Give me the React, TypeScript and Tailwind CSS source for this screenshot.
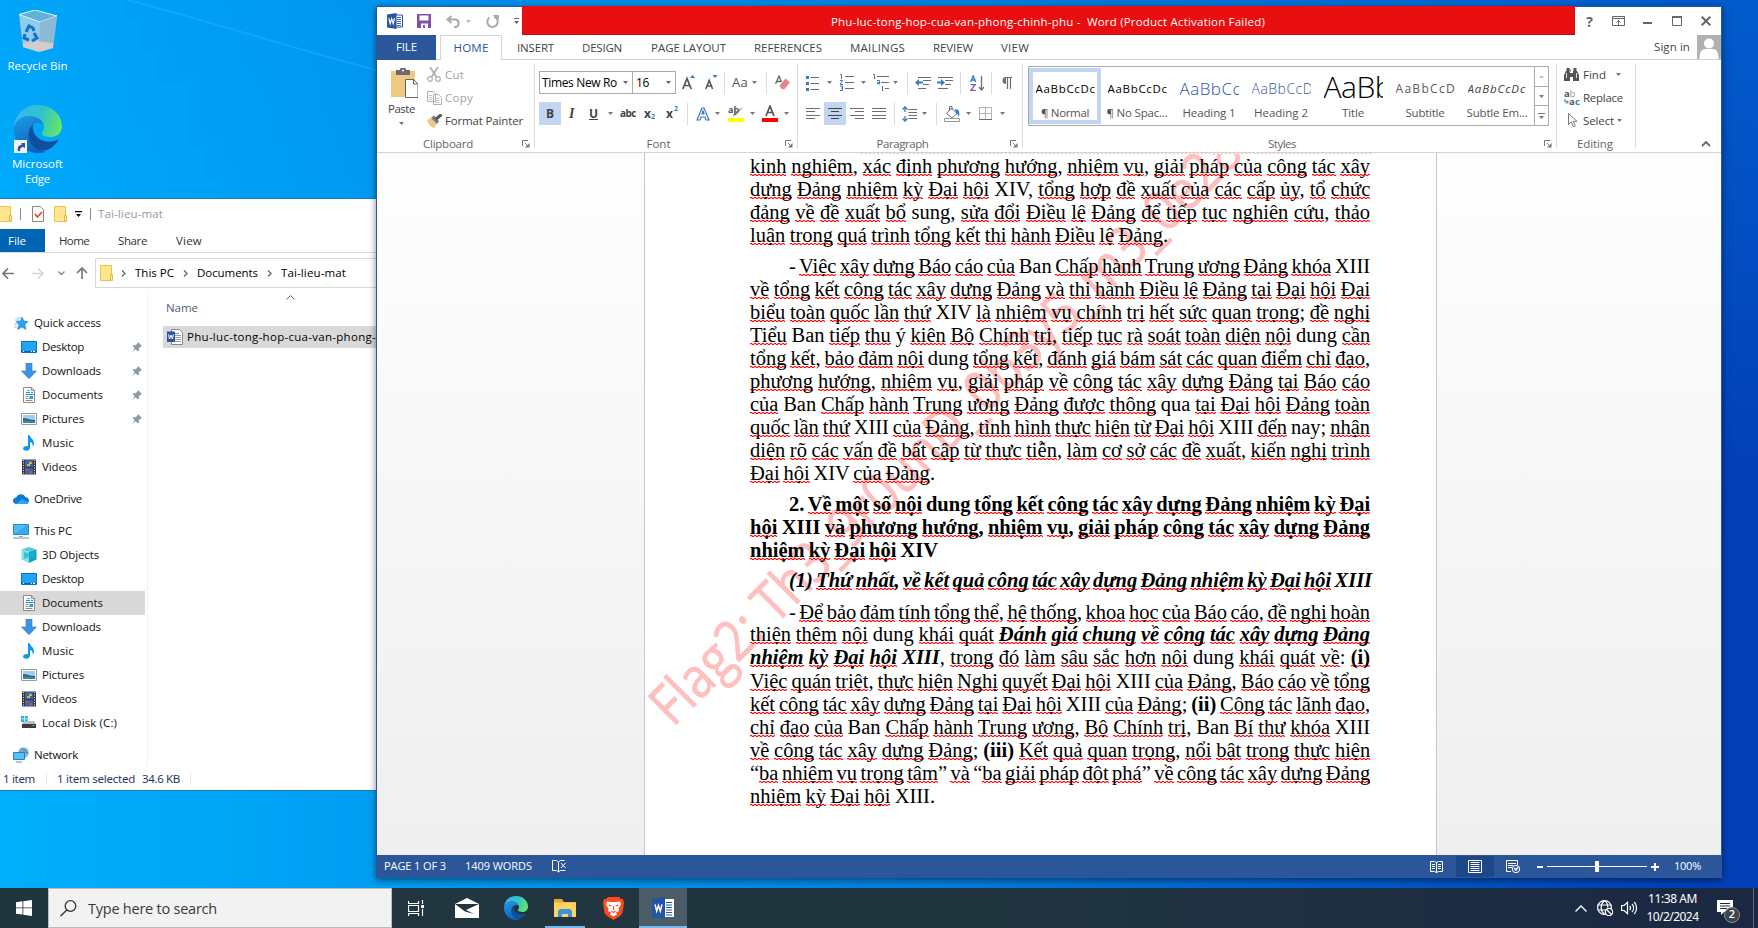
import React, { useLayoutEffect, useRef } from "react";

/* ---------- text helpers ---------- */

function T({ w, className = "", children }: { w: number; className?: string; children: string }) {
  const ref = useRef<HTMLSpanElement>(null);
  useLayoutEffect(() => {
    const el = ref.current;
    if (!el) return;
    el.style.letterSpacing = "0px";
    const natural = el.getBoundingClientRect().width;
    el.style.letterSpacing = `${(w - natural) / children.length}px`;
  }, [w, children]);
  return (
    <span className={`shrink-0 whitespace-pre ${className}`} style={{ width: w }}>
      <span ref={ref} className="inline-block">{children}</span>
    </span>
  );
}

type Run = [string, string];
const PLAIN = new Set(["XIV", "XIII", "sung", "Ban", "dung", "ý", "nay", "qua", "2", "-", "(1)", "(ii)", "(iii)"]);
const WAVE =
  "[background:repeating-linear-gradient(90deg,#ff1010_0_2px,#ffb4b4_2px_4px)_0_19px/100%_1px_no-repeat,repeating-linear-gradient(90deg,#ffb4b4_0_2px,#ff1010_2px_4px)_0_20px/100%_1px_no-repeat]";

function Words({ text }: { text: string }) {
  return (
    <>
      {text.split(/(\s+)/).map((tok, i) => {
        if (/^\s*$/.test(tok)) return tok;
        const m = tok.match(/^([“]?)(.*?)([,;:.”]*)$/)!;
        if (PLAIN.has(m[2])) return tok;
        return (
          <React.Fragment key={i}>
            {m[1]}
            <span className={WAVE}>{m[2]}</span>
            {m[3]}
          </React.Fragment>
        );
      })}
    </>
  );
}

function Line({ w = 620, runs, className = "" }: { w?: number; runs: Run[]; className?: string }) {
  const ref = useRef<HTMLSpanElement>(null);
  useLayoutEffect(() => {
    const el = ref.current;
    if (!el) return;
    el.style.wordSpacing = "0px";
    const spaces = (el.textContent || "").split(" ").length - 1;
    el.style.wordSpacing = `${(w - el.getBoundingClientRect().width) / spaces}px`;
  }, [w]);
  return (
    <div className={`h-[23px] whitespace-pre ${className}`}>
      <span ref={ref} className="inline-block">
        {runs.map(([c, t], i) => (
          <span key={i} className={c}><Words text={t} /></span>
        ))}
      </span>
    </div>
  );
}

const N = "";
const B = "font-bold";
const BI = "font-bold italic";

/* ---------- small shapes ---------- */

const Svg = ({ w, h, vb, className = "", children }: { w: number; h: number; vb?: string; className?: string; children: React.ReactNode }) => (
  <svg width={w} height={h} viewBox={vb || `0 0 ${w} ${h}`} className={`block shrink-0 ${className}`} fill="none">{children}</svg>
);
const Arr = ({ className = "text-[#777]" }: { className?: string }) => (
  <Svg w={5} h={3} className={className}><path d="M0 0h5L2.500 3z" fill="currentColor" /></Svg>
);
const Launch = () => (
  <Svg w={8} h={8}><path d="M.5 6V.5H6M3 3l3.500 3.500" stroke="#777" /><path d="M7.500 3v4.500H3z" fill="#777" /></Svg>
);
const Sep = ({ className = "" }: { className?: string }) => <div className={`h-[22px] w-px shrink-0 bg-[#dcdcdc] ${className}`} />;
const Cell = ({ className = "", children }: { className?: string; children: React.ReactNode }) => (
  <div className={`flex shrink-0 items-center ${className}`}>{children}</div>
);

const Folder = ({ className = "" }: { className?: string }) => (
  <Svg w={13} h={16} className={className}>
    <path d="M.5.5h11v15H.5z" fill="#ffe68f" stroke="#eac24d" />
    <path d="M10.500 9.500h2v6h-2z" fill="#ffe68f" stroke="#e5b93c" />
  </Svg>
);
const WordIcon = ({ s = 16 }: { s?: number }) => (
  <Svg w={s} h={s} vb="0 0 16 16">
    <path d="M8 2h7.500v12H8z" fill="#fff" stroke="#2b579a" />
    <path d="M10 4.500h4M10 6.500h4M10 8.500h4M10 10.500h4M10 12.500h4" stroke="#2b579a" strokeWidth=".9" />
    <path d="M0 1.500 9.500 0v16L0 14.500z" fill="#2b579a" />
    <path d="M1.800 5.200 3.200 10.600 4.700 5.800 6.200 10.600 7.600 5.200" stroke="#fff" strokeWidth="1.200" />
  </Svg>
);
const Edge = ({ s }: { s: number }) => (
  <Svg w={s} h={s} vb="0 0 48 48">
    <defs>
      <linearGradient id="eg1" x1="0" y1="10" x2="48" y2="26" gradientUnits="userSpaceOnUse">
        <stop stopColor="#36b8f2" /><stop offset=".5" stopColor="#2fc3cf" /><stop offset="1" stopColor="#6be85a" />
      </linearGradient>
      <linearGradient id="eg2" x1="8" y1="12" x2="24" y2="46" gradientUnits="userSpaceOnUse">
        <stop stopColor="#1c95e0" /><stop offset="1" stopColor="#0c60bb" />
      </linearGradient>
    </defs>
    <path d="M0 22C1 8 12 0 24 0c14 0 24 10 24 21 0 7-5 11-11 11-6 0-10-1.500-9-4 .6-1.600 2-2.500 2-6C30 16 23 11 15 11 7 11 2 16 0 22z" fill="url(#eg1)" />
    <path d="M0 22c2-6 7-11 15-11 8 0 14 4 14.500 9-2-2-5-2.500-7.500-1.500C15 21 13 31 19 39c4 5 9 7.500 13 7.500-3 1-5 1.500-8 1.500C10 48-1 37 0 22z" fill="url(#eg2)" />
    <path d="M19 19.500C13 25 13 35 19 41c5 6 15 8 25-5 .8-1-.3-1.600-1.300-1C33 40 20 34 19 24c-.2-2 0-3 0-4.500z" fill="#0f4f9d" />
  </Svg>
);

/* ---------- explorer tree icons ---------- */

const StarI = () => <Svg w={16} h={16}><path d="M9 2l1.800 4 4.200.5-3 3 .8 5L9 12l-4.500 2.500L6 9.500 3 6.500 7.500 6z" fill="#2aa3ea" stroke="#1b7fc4" strokeWidth=".6" /><path d="M4 3h4M2 5h4M1 9h4M1 12h3" stroke="#7cc8f2" /></Svg>;
const DesktopI = () => <Svg w={16} h={16}><path d="M.5 2.500h15v11H.5z" fill="#22a3f7" stroke="#0d73c0" /><path d="M1 12.500h14" stroke="#0a5ea5" /><path d="M2 12.500h1M10 12.500h1M12 12.500h2" stroke="#fff" /></Svg>;
const DownI = () => <Svg w={16} h={16}><path d="M5 0h6v8h4.500L8 15.800.5 8H5z" fill="#3b94e4" stroke="#2a7cc8" strokeWidth=".6" /></Svg>;
const DocI = () => <Svg w={16} h={16}><path d="M2.500.5h8l3 3v12h-11z" fill="#fff" stroke="#8c8c8c" /><path d="M10.500.5v3h3" stroke="#8c8c8c" /><path d="M6.500 3.500h2M5 5.500h4M10 5.500h2M4.500 7.500h8" stroke="#1e90d8" /><path d="M4.500 9.500h3M4.500 11.500h3M4.500 13.500h7" stroke="#888" /><path d="M8.500 9h3.500v3H8.500z" fill="#3d93cf" /></Svg>;
const PicI = () => <Svg w={16} h={16}><path d="M.5 2.500h15v11H.5z" fill="#fff" stroke="#9a9a9a" /><path d="M2 4h12v8H2z" fill="#9fd0f4" /><path d="M2 7c4 0 7 2 12 2v3H2z" fill="#2e6a72" /><path d="M2 10c4-1 8 0 12 1v1H2z" fill="#3f82b8" /></Svg>;
const MusicI = () => <Svg w={16} h={16}><path d="M7 0h1.500c.5 3 4.500 4 4.500 8 0 1.500-.5 2.500-1.500 3.500.5-3-1-4-2.500-4.500v5.500c0 2-1.500 3.200-3.500 3.200S2 15 2 13.500s2-3 5-2.500z" fill="#1199ee" /></Svg>;
const VideoI = () => <Svg w={16} h={16}><path d="M1 .5h14v15H1z" fill="#3a3a3a" /><path d="M4 1h8v7H4zM4 9h8v6H4z" fill="#2f66b8" /><path d="M8 4h3M6 6h3" stroke="#e8b22c" strokeWidth="2" /><path d="M5 11h2M8 13h3" stroke="#d84b2c" strokeWidth="2" /><path d="M2.500 1v14M13.500 1v14" stroke="#eee" strokeDasharray="1 1.500" /></Svg>;
const CloudI = () => <Svg w={16} h={16}><path d="M3.500 13C1.500 13 0 11.600 0 9.800 0 8 1.400 6.700 3.200 6.600 4 4.400 5.800 3.200 8 3.200c2 0 3.700 1 4.400 2.900C14.500 6.300 16 7.800 16 9.700c0 1.900-1.500 3.300-3.400 3.300z" fill="#0f78d4" /><path d="M3 12.800 9 8l6.500 3.500c-.6 1-1.600 1.500-2.900 1.500H3.500z" fill="#2aa8ec" /></Svg>;
const PcI = () => <Svg w={16} h={16}><path d="M.5 1.500h15v10H.5z" fill="#4fbcf7" stroke="#3a86b8" /><path d="M1 11 14 2h1v9z" fill="#36a9f0" /><path d="M6 13.500h4" stroke="#9ab" /><path d="M0 15h16" stroke="#8aa0ae" strokeWidth="1.200" /></Svg>;
const CubeI = () => <Svg w={16} h={16}><path d="M8 0l7.500 2.500L8 5 .5 2.500z" fill="#53c9de" /><path d="M.5 2.500 8 5v11L.5 12.500z" fill="#7fe0ea" /><path d="M15.500 2.500 8 5v11l7.500-3.500z" fill="#12a3bd" /><path d="M3 5l5 1.500L13 5v7l-5-2-5 2z" fill="#22b7cc" opacity=".7" /></Svg>;
const DiskI = () => <Svg w={16} h={16}><path d="M0 1h3v2.500H0zM3.800 1h3v2.500h-3zM0 4.300h3V7H0zM3.800 4.300h3V7h-3z" fill="#17b3ee" /><path d="M3 6h10l2 3H1z" fill="#bdbdbd" /><path d="M1 9h14v4H1z" fill="#3c3c3c" /><path d="M11.500 10.500h2" stroke="#4be04b" /></Svg>;
const NetI = () => <Svg w={16} h={16}><circle cx="10.500" cy="5.500" r="5.300" fill="#7fb6d8" /><path d="M8 2c2 0 3 2 5 1M7 5c3 1 5-1 8 1" stroke="#3e7ea8" /><path d="M.5 5.500h11v7H.5z" fill="#58c0f8" stroke="#2c7fbb" /><path d="M3 15h6" stroke="#9ab" strokeWidth="1.400" /></Svg>;
const PinI = () => <Svg w={10} h={10} className="text-[#8e9aa4]"><path d="M6 0l4 4-1.200.4-2 2 .2 1.800L5.800 9.400 3.600 7.200 0 10l2.700-3.700L.6 4.200 1.800 3l1.800.2 2-2z" fill="currentColor" /></Svg>;

function TreeRow({ icon, label, w, level = 1, pin, sel, className = "" }: { icon: React.ReactNode; label: string; w: number; level?: number; pin?: boolean; sel?: boolean; className?: string }) {
  return (
    <div className={`flex h-6 w-[145px] items-center ${level === 1 ? "pl-[21px]" : "pl-[13px]"} ${sel ? "bg-[#d9d9d9]" : ""} ${className}`}>
      {icon}
      <T w={w} className="ml-[5px]">{label}</T>
      {pin && <div className="mr-[3px] ml-auto"><PinI /></div>}
    </div>
  );
}

const Chev = () => <Svg w={5} h={7}><path d="M1 .5l3 3-3 3" stroke="#666" strokeWidth="1.300" /></Svg>;

function Explorer() {
  return (
    <div className="absolute top-[198px] left-0 flex h-[593px] w-[376px] flex-col border-y border-[#1a7db5] bg-white text-[11.500px] text-[#111]">
      <div className="flex h-[30px] shrink-0 items-center">
        <Folder className="-ml-px" />
        <div className="ml-2 h-3 w-px bg-[#888]" />
        <Svg w={12} h={16} className="ml-[11px]"><path d="M.5.5h8l3 3v12H.5z" fill="#fafafa" stroke="#888" /><path d="M3 8l2.500 3L10 6" stroke="#e0531f" strokeWidth="1.800" /></Svg>
        <Folder className="ml-[10px]" />
        <Svg w={7} h={6} className="ml-2"><path d="M0 .5h7" stroke="#000" strokeWidth="1.500" /><path d="M1 3h5L3.500 6z" fill="#000" /></Svg>
        <div className="ml-2 h-3 w-px bg-[#888]" />
        <T w={65} className="ml-[7px] text-[#999]">Tai-lieu-mat</T>
      </div>
      <div className="flex h-6 shrink-0 items-center border-b border-[#dadbdc] text-[#333]">
        <div className="flex h-[23px] w-[45px] items-center bg-[#0066b4] pl-2 text-white"><T w={18}>File</T></div>
        <T w={30} className="ml-[14px]">Home</T>
        <T w={29} className="ml-[29px]">Share</T>
        <T w={26} className="ml-[29px]">View</T>
      </div>
      <div className="mt-[5px] flex h-[30px] shrink-0 items-center">
        <Svg w={12} h={11} className="ml-[2px]"><path d="M12 5.500H1M6 .5l-5 5 5 5" stroke="#777" strokeWidth="1.700" /></Svg>
        <Svg w={12} h={11} className="ml-[18px]"><path d="M0 5.500h11M6 .5l5 5-5 5" stroke="#d5d5d5" strokeWidth="1.500" /></Svg>
        <Svg w={7} h={5} className="ml-[14px]"><path d="M.5.5l3 3 3-3" stroke="#888" strokeWidth="1.400" /></Svg>
        <Svg w={12} h={12} className="ml-[11px]"><path d="M6 12V1M1 6l5-5 5 5" stroke="#777" strokeWidth="1.700" /></Svg>
        <div className="ml-[7px] flex h-[30px] flex-1 items-center border border-r-0 border-[#d9d9d9] text-black">
          <Folder className="ml-1" />
          <div className="ml-[8px]"><Chev /></div>
          <T w={39} className="ml-[9px]">This PC</T>
          <div className="ml-[9px]"><Chev /></div>
          <T w={61} className="ml-[9px]">Documents</T>
          <div className="ml-[9px]"><Chev /></div>
          <T w={65} className="ml-[9px]">Tai-lieu-mat</T>
        </div>
      </div>
      <div className="mt-[6px] flex h-[474px] shrink-0">
        <div className="h-[472px] w-[148px] border-r border-[#f0f0f0] pt-[17px]">
          <TreeRow level={0} icon={<StarI />} label="Quick access" w={67} />
          <TreeRow icon={<DesktopI />} label="Desktop" w={42} pin />
          <TreeRow icon={<DownI />} label="Downloads" w={59} pin />
          <TreeRow icon={<DocI />} label="Documents" w={61} pin />
          <TreeRow icon={<PicI />} label="Pictures" w={42} pin />
          <TreeRow icon={<MusicI />} label="Music" w={32} />
          <TreeRow icon={<VideoI />} label="Videos" w={35} />
          <TreeRow level={0} icon={<CloudI />} label="OneDrive" w={48} className="mt-2" />
          <TreeRow level={0} icon={<PcI />} label="This PC" w={38} className="mt-2" />
          <TreeRow icon={<CubeI />} label="3D Objects" w={57} />
          <TreeRow icon={<DesktopI />} label="Desktop" w={42} />
          <TreeRow icon={<DocI />} label="Documents" w={61} sel />
          <TreeRow icon={<DownI />} label="Downloads" w={59} />
          <TreeRow icon={<MusicI />} label="Music" w={32} />
          <TreeRow icon={<PicI />} label="Pictures" w={42} />
          <TreeRow icon={<VideoI />} label="Videos" w={35} />
          <TreeRow icon={<DiskI />} label="Local Disk (C:)" w={75} />
          <TreeRow level={0} icon={<NetI />} label="Network" w={44} className="mt-2" />
        </div>
        <div className="flex flex-1 flex-col overflow-hidden">
          <Svg w={9} h={5} className="mt-[1px] ml-[138px]"><path d="M.5 4.500l4-4 4 4" stroke="#666" /></Svg>
          <div className="mt-px ml-[18px] flex h-[13px] items-center text-[#4c607a]"><T w={32}>Name</T></div>
          <div className="mt-[12px] ml-[15px] flex h-[22px] items-center overflow-hidden bg-[#d9d9d9] text-black">
            <Svg w={16} h={16} className="ml-1"><path d="M4.500.5h8l3 3v12h-11z" fill="#fff" stroke="#888" /><path d="M7 4.500h5M8 6.500h6M8 8.500h6M8 10.500h6M7 12.500h7" stroke="#999" /><path d="M0 2.500h8v10.500H0z" fill="#2b579a" /><path d="M1.500 5.500l1 4.500L4 6l1.400 4 1-4.500" stroke="#fff" /></Svg>
            <T w={189} className="ml-[4px]">Phu-luc-tong-hop-cua-van-phong-</T>
          </div>
        </div>
      </div>
      <div className="flex h-[22px] items-center font-['Noto_Sans',sans-serif] text-[11.500px] text-[#26386b]">
        <T w={32} className="ml-[3px]">1 item</T>
        <div className="ml-[11px] h-3 w-px bg-[#e5e5e5]" />
        <T w={78} className="ml-[10px]">1 item selected</T>
        <T w={38} className="ml-[7px]">34.6 KB</T>
        <div className="ml-[10px] h-3 w-px bg-[#e5e5e5]" />
      </div>
    </div>
  );
}

/* ---------- word window ---------- */

const G = "#6d6d6d";
const BL = "#3b7ab8";

function TitleBar() {
  return (
    <div className="flex h-[28px] shrink-0 items-center">
      <div className="ml-[10px]"><WordIcon /></div>
      <Svg w={14} h={14} className="ml-[14px]"><path d="M0 0h14v14H0z" fill="#8250aa" /><path d="M2.500 1.500h9v5h-9z" fill="#fff" /><path d="M4 9.500h7V14H4z" fill="#fff" /><path d="M6 11h2v3H6z" fill="#8250aa" /></Svg>
      <Svg w={15} h={13} className="ml-[15px]"><path d="M5.500 1 1.500 4.500l4 3.500M2 4.500h7.500a3.800 3.800 0 0 1 0 7.500H8" stroke="#aaa" strokeWidth="2" /></Svg>
      <Arr className="ml-[5px] text-[#bbb]" />
      <Svg w={13} h={13} className="ml-[15px]"><path d="M3.500 2.500a5.200 5.200 0 1 0 6 0" stroke="#aaa" strokeWidth="2" /><path d="M7 0h6v5l-2-2-2 1z" fill="#aaa" /></Svg>
      <Svg w={5} h={6} className="ml-[15px]"><path d="M0 .5h5" stroke="#666" /><path d="M0 3h5L2.500 6z" fill="#666" /></Svg>
      <div className="-mt-px ml-[3px] flex h-[29px] w-[1053px] items-center border-b border-[#b01010] bg-[#e90f10] text-[11.500px] text-white">
        <T w={434} className="ml-[309px] pt-1">Phu-luc-tong-hop-cua-van-phong-chinh-phu -  Word (Product Activation Failed)</T>
      </div>
      <span className="ml-[10px] w-[9px] text-center text-[14px] font-bold text-[#666]">?</span>
      <Svg w={13} h={10} className="ml-[18px]"><path d="M.5.500h12v9H.5zM.5 2.500h12M6.500 9V4.500M4.500 6.500l2-2 2 2" stroke="#666" /></Svg>
      <Svg w={9} h={10} className="ml-[18px]"><path d="M0 7h9" stroke="#666" strokeWidth="2" /></Svg>
      <Svg w={10} h={10} className="ml-[20px]"><path d="M.5 1h9v8.500h-9z" stroke="#666" /><path d="M0 1h10" stroke="#666" strokeWidth="2" /></Svg>
      <Svg w={10} h={10} className="ml-[19px]"><path d="M.7.7l8.600 8.600M9.300.7.7 9.300" stroke="#666" strokeWidth="2" /></Svg>
    </div>
  );
}

function Tabs() {
  return (
    <div className="flex h-[25px] shrink-0 items-center border-b border-[#d4d4d4] text-[11.500px] text-[#444]">
      <div className="flex h-[25px] w-[59px] items-center justify-center bg-[#2b579a] text-white"><T w={21}>FILE</T></div>
      <div className="-mb-px ml-[4px] flex h-[25px] w-[62px] items-center justify-center border border-b-0 border-[#d4d4d4] bg-white text-[#2b579a]"><T w={35}>HOME</T></div>
      <div className="ml-[15px] flex gap-[28px] pt-[2px]">
        <T w={37}>INSERT</T>
        <T w={40}>DESIGN</T>
        <T w={75} className="ml-px">PAGE LAYOUT</T>
        <T w={68}>REFERENCES</T>
        <T w={55}>MAILINGS</T>
        <T w={40}>REVIEW</T>
        <T w={28}>VIEW</T>
      </div>
      <T w={36} className="ml-auto">Sign in</T>
      <Svg w={24} h={24} className="ml-[7px]"><path d="M0 0h24v24H0z" fill="#b1b1b1" /><circle cx="12" cy="8.500" r="5" fill="#fff" /><path d="M2.500 24c0-7 2-10 6-10h7c4 0 6 3 6 10z" fill="#fff" /></Svg>
    </div>
  );
}

function GroupFoot({ label, w, launch = true }: { label: string; w: number; launch?: boolean }) {
  return (
    <div className="mt-auto -mb-1 flex h-[16px] items-center text-[#666]">
      <div className="mr-[3px] flex flex-1 justify-center"><T w={w}>{label}</T></div>
      <div className="w-[12px]">{launch && <Launch />}</div>
    </div>
  );
}

const group = "flex h-[84px] shrink-0 flex-col border-r border-[#dcdcdc]";

function Clipboard() {
  return (
    <div className={`${group} w-[158px]`}>
      <div className="flex">
        <div className="ml-[11px] flex w-[29px] flex-col items-center pt-[4px]">
          <Svg w={29} h={30} className="ml-[2px]"><path d="M2 3h24v26H2z" fill="#eec982" /><path d="M7 2h4a3 3 0 0 1 6 0h4v5H7z" fill="#6a6a6a" /><circle cx="14" cy="2.500" r="1" fill="#fff" /><path d="M16.500 11.500h8l4.500 4.500v13.500H16.500z" fill="#fff" stroke="#666" /><path d="M24.500 11.500V16H29" stroke="#666" /></Svg>
          <T w={27} className="mt-[2px] -ml-[2px] text-[#444]">Paste</T>
          <Arr className="mt-[5px] -ml-[2px] text-[#777]" />
        </div>
        <div className="-mt-px ml-[10px] flex flex-col text-[#a3a3a3]">
          <div className="flex h-[23px] items-center"><Svg w={14} h={15}><path d="M3 0l6.500 10M11 0 4.500 10" stroke="#b0b0b0" strokeWidth="1.800" /><circle cx="3" cy="12" r="2.300" stroke="#b0b0b0" strokeWidth="1.200" /><circle cx="11" cy="12" r="2.300" stroke="#b0b0b0" strokeWidth="1.200" /></Svg><T w={19} className="ml-[4px]">Cut</T></div>
          <div className="flex h-[23px] items-center"><Svg w={15} h={14}><path d="M.5.5h6l2 2v8h-8zM6.500 3.500h5l3 3v7h-8z" fill="#fff" stroke="#b0b0b0" /><path d="M2 4.500h3M2 6.500h3M2 8.500h3M8.500 7.500h4M8.500 9.500h4M8.500 11.500h4" stroke="#c4c4c4" /></Svg><T w={28} className="ml-[3px]">Copy</T></div>
          <div className="flex h-[23px] items-center text-[#444]"><Svg w={16} h={14}><path d="M0 6l4-2 6 6-3 4C4 13 1 10 0 6z" fill="#eec982" /><path d="M4 4l3-2.500L12 7l-2 3z" fill="#777" /><path d="M9 5l5.500-4.500" stroke="#555" strokeWidth="3" /></Svg><T w={78} className="ml-[2px]">Format Painter</T></div>
        </div>
      </div>
      <GroupFoot label="Clipboard" w={50} />
    </div>
  );
}

function FontGroup() {
  return (
    <div className={`${group} w-[263px]`}>
      <div className="mt-[7px] ml-[4px] flex h-[23px] items-center text-[#222]">
        <div className="flex h-[23px] w-[94px] items-center border border-[#ababab] pl-[2px] text-[12px] text-black"><T w={75}>Times New Ro</T><Arr className="ml-[6px] text-[#666]" /></div>
        <div className="-ml-px flex h-[23px] w-[44px] items-center border border-[#ababab] pl-[3px] text-[12px] text-black"><T w={13}>16</T><Arr className="ml-[17px] text-[#666]" /></div>
        <Cell className="ml-[6px] w-[23px]"><Svg w={14} h={15}><path d="M.8 14 5 3.500 9.200 14M2.400 10.500h5.200" stroke="#555" strokeWidth="1.700" /><path d="M8 3h5l-2.500-3z" fill={BL} /></Svg></Cell>
        <Cell className="w-[19px]"><Svg w={13} h={15}><path d="M.8 14 4.200 5.500 7.600 14M2 11h4.400" stroke="#555" strokeWidth="1.600" /><path d="M7.500 0h5L10 3z" fill={BL} /></Svg></Cell>
        <Sep />
        <Cell className="ml-[7px] w-[20px] text-[13px] text-[#555]"><T w={16}>Aa</T></Cell>
        <Arr />
        <Sep className="ml-[9px]" />
        <Svg w={15} h={15} className="ml-[8px]"><path d="M.5 9 4 1l2.500 6M2 6.500h4" stroke="#666" strokeWidth="1.300" /><path d="M4.500 10.500 10.500 3.500l4.500 4-6 7-3-1z" fill="#e5838f" /></Svg>
      </div>
      <div className="mt-[8px] ml-[4px] flex h-[23px] items-center font-bold text-[#444]">
        <div className="flex h-[23px] w-[22px] items-center justify-center bg-[#c2d5f2] text-[12px]">B</div>
        <Cell className="w-[28px] pl-[8px] font-['Liberation_Serif',serif] text-[14px] italic">I</Cell>
        <Cell className="w-[19px] text-[12px] underline">U</Cell>
        <Cell className="w-[12px]"><Arr /></Cell>
        <Cell className="w-[24px] text-[10px] line-through"><T w={16}>abc</T></Cell>
        <Cell className="w-[22px] text-[12px]">x<span className="mt-[7px] text-[7px] text-[#3b7ab8]">2</span></Cell>
        <Cell className="w-[21px] text-[12px]">x<span className="-mt-[9px] ml-px text-[7px] text-[#3b7ab8]">2</span></Cell>
        <Sep />
        <Cell className="ml-[8px] w-[19px]"><Svg w={14} h={14}><path d="M1 13 6 1h2l5 12h-3l-1-3H5l-1 3zM6 7h2L7 4z" fill="#fff" stroke={BL} strokeWidth="1.200" /></Svg></Cell>
        <Cell className="w-[13px]"><Arr /></Cell>
        <Cell className="w-[22px]"><Svg w={17} h={17}><path d="M0 13h16v4H0z" fill="#ff0" /><text x="0" y="8" fontSize="9" fontWeight="700" fill="#555" fontFamily="Open Sans">ab</text><path d="M15 2 8 10l-3 1 1-3z" fill="#777" /></Svg></Cell>
        <Cell className="w-[12px]"><Arr /></Cell>
        <Cell className="w-[22px]"><Svg w={16} h={17}><path d="M0 13h16v4H0z" fill="#f00" /><path d="M4 11 8 1l4 10M5.500 7.500h5" stroke="#555" strokeWidth="1.700" /></Svg></Cell>
        <Arr />
      </div>
      <GroupFoot label="Font" w={24} />
    </div>
  );
}

function ParagraphGroup() {
  return (
    <div className={`${group} w-[225px]`}>
      <div className="mt-[7px] ml-[8px] flex h-[23px] items-center">
        <Cell className="w-[21px]"><Svg w={14} h={16}><path d="M4.500 2.500H13M4.500 8.500H13M4.500 14.500H13" stroke={G} /><path d="M0 1h3v3H0zM0 7h3v3H0zM0 13h3v3H0z" fill={BL} /></Svg></Cell>
        <Cell className="w-[13px]"><Arr /></Cell>
        <Cell className="w-[21px]"><Svg w={14} h={17}><path d="M5 2.500h9M5 8.500h9M5 14.500h9" stroke={G} /><path d="M0 .5h1.500V5M0 6.500h2.500L0 10.500h3M0 12h2.500v2H1m1.500 0v2.500H0" stroke={BL} /></Svg></Cell>
        <Cell className="w-[12px]"><Arr /></Cell>
        <Cell className="w-[20px]"><Svg w={16} h={17}><path d="M4 2.500h12M8 8.500h8M12 14.500h4" stroke={G} /><path d="M0 .5h1.500V5M4 6.500h2.500V10H4.500V8.500h2M9.500 12v5" stroke={BL} /></Svg></Cell>
        <Cell className="w-[14px]"><Arr /></Cell>
        <Sep />
        <Cell className="ml-[7px] w-[22px]"><Svg w={16} h={12}><path d="M3 .5h13M8 3.500h8M8 7.500h6M3 11.500h8" stroke={G} /><path d="M0 5.500 4 2v2.500h4v2H4V9z" fill={BL} /></Svg></Cell>
        <Cell className="w-[23px]"><Svg w={16} h={12}><path d="M1 .5h15M8 3.500h8M8 7.500h6M1 11.500h10" stroke={G} /><path d="M8 5.500 4 2v2.500H0v2h4V9z" fill={BL} /></Svg></Cell>
        <Sep />
        <Cell className="ml-[9px] w-[21px]"><Svg w={14} h={16}><path d="M.7 7 3.200.8 5.700 7M1.500 5h3.500" stroke={BL} strokeWidth="1.300" /><path d="M.5 9.600h4.700L.8 15.400h4.900" stroke="#8250aa" strokeWidth="1.300" /><path d="M11.500 1v14M9 12l2.500 3 2.500-3" stroke={G} strokeWidth="1.300" /></Svg></Cell>
        <Sep />
        <Svg w={11} h={12} className="ml-[10px]"><path d="M4 0h6v1H4v6a3.500 3.500 0 0 1 0-7z" fill={G} /><path d="M5.500 0v12M8.500 0v12" stroke={G} strokeWidth="1.200" /></Svg>
      </div>
      <div className="mt-[8px] ml-[8px] flex h-[23px] items-center">
        <Cell className="w-[18px]"><Svg w={14} h={11}><path d="M0 .5h14M0 3.500h9M0 7.500h14M0 10.500h9" stroke={G} /></Svg></Cell>
        <Cell className="mr-[4px] h-[23px] w-[22px] justify-center bg-[#c2d5f2]"><Svg w={14} h={11}><path d="M0 .5h14M3 3.500h8M0 7.500h14M3 10.500h8" stroke="#444" /></Svg></Cell>
        <Cell className="w-[22px]"><Svg w={14} h={11}><path d="M0 .5h14M5 3.500h9M0 7.500h14M5 10.500h9" stroke={G} /></Svg></Cell>
        <Cell className="w-[22px]"><Svg w={14} h={11}><path d="M0 .5h14M0 3.500h14M0 7.500h14M0 10.500h14" stroke={G} /></Svg></Cell>
        <Sep />
        <Cell className="ml-[7px] w-[20px]"><Svg w={15} h={16}><path d="M6.500 3.500H15M6.500 6.500H15M6.500 9.500H15M6.500 12.500H15" stroke={G} /><path d="M3 1v5M3 10v5M.5 3.500 3 1l2.500 2.500M.5 12.500 3 15l2.500-2.500" stroke={BL} strokeWidth="1.300" /></Svg></Cell>
        <Cell className="w-[14px]"><Arr /></Cell>
        <Sep />
        <Cell className="ml-[7px] w-[22px]"><Svg w={16} h={16}><path d="M7.500 2 13 7.500 8 12 2.500 7.500z" stroke={G} /><path d="M5.500 5V.5h2.500V4" stroke={G} /><path d="M11 3c4 0 5 3 4 8-1-2-1-3-3-4z" fill={BL} /><path d="M.5 12.500h15v3H.5z" fill="#fff" stroke="#999" /></Svg></Cell>
        <Cell className="w-[13px]"><Arr /></Cell>
        <Cell className="w-[21px]"><Svg w={13} h={13}><path d="M.5.500h12v11M.5.500v11M6.500.500v12M.5 6.500h12" stroke={G} strokeDasharray="1 1" /><path d="M0 12.500h13" stroke={G} /></Svg></Cell>
        <Arr />
      </div>
      <GroupFoot label="Paragraph" w={52} />
    </div>
  );
}

function Style({ sample, cls, label, w, sel }: { sample: string; cls: string; label: string; w: number; sel?: boolean }) {
  return (
    <div className={`flex h-[56px] w-[72px] shrink-0 flex-col items-center border-4 ${sel ? "border-[#c2d5f2]" : "border-transparent"}`}>
      <div className={`flex h-[29px] w-[59px] shrink-0 items-center overflow-hidden whitespace-nowrap ${cls}`}>{sample}</div>
      <div className="mt-[2px] flex h-[20px] shrink-0 items-center text-[#555]"><T w={w}>{label}</T></div>
    </div>
  );
}

function StylesGroup() {
  return (
    <div className={`${group} w-[534px]`}>
      <div className="mt-[2px] ml-[5px] flex h-[60px] w-[521px] border border-[#ababab]">
        <div className="flex w-[505px] items-center">
          <Style sel sample="AaBbCcDc" cls="pt-[5px] text-[11.500px] tracking-[0.700px] text-black" label="¶ Normal" w={48} />
          <Style sample="AaBbCcDc" cls="pt-[5px] text-[11.500px] tracking-[0.700px] text-black" label="¶ No Spac..." w={61} />
          <Style sample="AaBbCc" cls="pt-[5px] text-[17px] font-light tracking-[0.500px] text-[#2b579a]" label="Heading 1" w={53} />
          <Style sample="AaBbCcD" cls="pt-[3px] text-[14px] font-light tracking-[0.500px] text-[#2b579a]" label="Heading 2" w={54} />
          <Style sample="AaBb" cls="text-[30px] leading-none font-light tracking-[-0.500px] text-black" label="Title" w={22} />
          <Style sample="AaBbCcD" cls="pt-[4px] text-[12px] tracking-[1.300px] text-[#5a5a5a]" label="Subtitle" w={39} />
          <Style sample="AaBbCcDc" cls="pt-[5px] text-[11.500px] tracking-[0.900px] text-[#404040] italic" label="Subtle Em..." w={61} />
        </div>
        <div className="flex flex-1 flex-col border-l border-[#ababab]">
          <div className="flex h-[20px] items-center justify-center border-b border-[#ababab]"><Svg w={5} h={3}><path d="M0 3h5L2.500 0z" fill="#c4c4c4" /></Svg></div>
          <div className="flex h-[19px] items-center justify-center border-b border-[#ababab]"><Arr /></div>
          <div className="flex flex-1 items-center justify-center"><Svg w={7} h={6}><path d="M0 .5h7" stroke="#777" /><path d="M1 3h5L3.500 6z" fill="#777" /></Svg></div>
        </div>
      </div>
      <GroupFoot label="Styles" w={28} />
    </div>
  );
}

function EditingGroup() {
  return (
    <div className={`${group} w-[79px] pl-[7px] text-[#444]`}>
      <div className="-mt-px flex h-[23px] items-center"><Svg w={15} h={13}><path d="M2.500 1h3v3h1V1h0M0 13V7l2-4h4v10zM15 13V7l-2-4H9v10z" fill="#555" /><path d="M2.500 0h3v3h-3zM9.500 0h3v3h-3zM6 5h3v4H6z" fill="#555" /><path d="M2.500 5v5M12.500 5v5" stroke="#ddd" /></Svg><T w={23} className="ml-[4px]">Find</T><Arr className="ml-[10px] text-[#777]" /></div>
      <div className="flex h-[23px] items-center"><Svg w={16} h={16}><text x="0" y="7" fontSize="9.500" fontWeight="700" fill="#555" fontFamily="Open Sans">a</text><text x="5.500" y="7" fontSize="9.500" fill="#999" fontFamily="Open Sans">b</text><text x="5" y="15" fontSize="9.500" fontWeight="700" fill="#555" fontFamily="Open Sans">a</text><text x="11" y="15" fontSize="9.500" fontWeight="700" fill="#3b7ab8" fontFamily="Open Sans">c</text><path d="M1 9v3h3M2.500 10.500l2 1.500-2 1.500" stroke={BL} /></Svg><T w={40} className="ml-[3px]">Replace</T></div>
      <div className="flex h-[23px] items-center"><Svg w={10} h={15} className="ml-[4px]"><path d="M.5.5v11l2.800-2.700 2 5 2-1-2-4.500H9z" fill="#fff" stroke="#777" /></Svg><T w={31} className="ml-[5px]">Select</T><Arr className="ml-[3px] text-[#777]" /></div>
      <div className="mt-auto -mb-1 flex h-[16px] items-center pl-[13px] text-[#666]"><T w={36}>Editing</T></div>
    </div>
  );
}

function Ribbon() {
  return (
    <div className="flex h-[93px] shrink-0 border-b border-[#d4d4d4] bg-white pt-[4px] text-[11.500px]">
      <Clipboard />
      <FontGroup />
      <ParagraphGroup />
      <StylesGroup />
      <EditingGroup />
      <Svg w={10} h={6} className="mb-[5px] ml-auto mr-[10px] self-end"><path d="M1 5l4-4 4 4" stroke="#666" strokeWidth="1.800" /></Svg>
    </div>
  );
}

function Watermark() {
  const ref = useRef<HTMLSpanElement>(null);
  useLayoutEffect(() => {
    const el = ref.current;
    if (el) el.style.transform = `rotate(-45deg) scaleX(${809 / el.offsetWidth})`;
  }, []);
  return (
    <span ref={ref} className="absolute top-[515px] left-[28px] origin-[0_60px] leading-[76px] text-[56px] whitespace-nowrap text-[#ffbfbf] [-webkit-text-stroke:0.8px_#ffbfbf]">
      Flag2: Th3_9r0unD_0b3y5_m3_0e28
    </span>
  );
}

function Document() {
  return (
    <div className="flex h-[702px] shrink-0 justify-start overflow-hidden bg-linear-to-b from-[#fefefe] to-[#efefef] pl-[267px]">
      <div className="relative h-[702px] w-[793px] overflow-hidden border-x border-[#c6c6c6] bg-white">
        <Watermark />
        <div className="absolute top-0 left-[216px] h-px w-[510px] bg-[repeating-linear-gradient(90deg,#f3c9c9_0_2px,#ffffff_2px_4px)]" />
        <div className="relative pt-[2px] pl-[105px] font-['Liberation_Serif',serif] text-[20.500px] leading-[23px] text-black">
          <Line runs={[[N, "kinh nghiệm, xác định phương hướng, nhiệm vụ, giải pháp của công tác xây"]]} />
          <Line runs={[[N, "dựng Đảng nhiệm kỳ Đại hội XIV, tổng hợp đề xuất của các cấp ủy, tổ chức"]]} />
          <Line runs={[[N, "đảng về đề xuất bổ sung, sửa đổi Điều lệ Đảng để tiếp tục nghiên cứu, thảo"]]} />
          <Line w={418} runs={[[N, "luận trong quá trình tổng kết thi hành Điều lệ Đảng."]]} />
          <Line className="mt-2 pl-[39px]" w={581} runs={[[N, "- Việc xây dựng Báo cáo của Ban Chấp hành Trung ương Đảng khóa XIII"]]} />
          <Line runs={[[N, "về tổng kết công tác xây dựng Đảng và thi hành Điều lệ Đảng tại Đại hội Đại"]]} />
          <Line runs={[[N, "biểu toàn quốc lần thứ XIV là nhiệm vụ chính trị hết sức quan trọng; đề nghị"]]} />
          <Line runs={[[N, "Tiểu Ban tiếp thu ý kiên Bộ Chính trị, tiếp tục rà soát toàn diện nội dung cần"]]} />
          <Line runs={[[N, "tổng kết, bảo đảm nội dung tổng kết, đánh giá bám sát các quan điểm chỉ đạo,"]]} />
          <Line runs={[[N, "phương hướng, nhiệm vụ, giải pháp về công tác xây dựng Đảng tại Báo cáo"]]} />
          <Line runs={[[N, "của Ban Chấp hành Trung ương Đảng được thông qua tại Đại hội Đảng toàn"]]} />
          <Line runs={[[N, "quốc lần thứ XIII của Đảng, tình hình thực hiện từ Đại hội XIII đến nay; nhận"]]} />
          <Line runs={[[N, "diện rõ các vấn đề bất cập từ thực tiễn, làm cơ sở các đề xuất, kiến nghị trình"]]} />
          <Line w={185} runs={[[N, "Đại hội XIV của Đảng."]]} />
          <Line className="mt-2 pl-[39px]" w={581} runs={[[B, "2. Về một số nội dung tổng kết công tác xây dựng Đảng nhiệm kỳ Đại"]]} />
          <Line runs={[[B, "hội XIII và phương hướng, nhiệm vụ, giải pháp công tác xây dựng Đảng"]]} />
          <Line w={188} runs={[[B, "nhiệm kỳ Đại hội XIV"]]} />
          <Line className="mt-[7px] pl-[39px]" w={583} runs={[[BI, "(1) Thứ nhất, về kết quả công tác xây dựng Đảng nhiệm kỳ Đại hội XIII"]]} />
          <Line className="mt-[9px] pl-[39px]" w={581} runs={[[N, "- Để bảo đảm tính tổng thể, hệ thống, khoa học của Báo cáo, đề nghị hoàn"]]} />
          <Line className="-mt-px" runs={[[N, "thiện thêm nội dung khái quát "], [BI, "Đánh giá chung về công tác xây dựng Đảng"]]} />
          <Line runs={[[BI, "nhiệm kỳ Đại hội XIII"], [N, ", trong đó làm sâu sắc hơn nội dung khái quát về: "], [B, "(i)"]]} />
          <Line className="mt-px" runs={[[N, "Việc quán triệt, thực hiện Nghị quyết Đại hội XIII của Đảng, Báo cáo về tổng"]]} />
          <Line runs={[[N, "kết công tác xây dựng Đảng tại Đại hội XIII của Đảng; "], [B, "(ii)"], [N, " Công tác lãnh đạo,"]]} />
          <Line runs={[[N, "chỉ đạo của Ban Chấp hành Trung ương, Bộ Chính trị, Ban Bí thư khóa XIII"]]} />
          <Line runs={[[N, "về công tác xây dựng Đảng; "], [B, "(iii)"], [N, " Kết quả quan trọng, nổi bật trong thực hiện"]]} />
          <Line runs={[[N, "“ba nhiệm vụ trọng tâm” và “ba giải pháp đột phá” về công tác xây dựng Đảng"]]} />
          <Line w={185} runs={[[N, "nhiệm kỳ Đại hội XIII."]]} />
        </div>
      </div>
    </div>
  );
}

function StatusBar() {
  return (
    <div className="flex h-[23px] shrink-0 items-center bg-[#2b579a] text-[11px] text-white">
      <T w={62} className="ml-[7px]">PAGE 1 OF 3</T>
      <T w={67} className="ml-[19px]">1409 WORDS</T>
      <Svg w={15} h={13} className="ml-[20px]"><path d="M.5.5h4l2 1.500 2-1.500h4M.5.5v10h4l2 1.500 2-1.500h5M6.500 2v10M9 3l4.500 5M13.500 3 9 8" stroke="#fff" /></Svg>
      <Svg w={13} h={12} className="ml-auto"><path d="M.5.500h4l2 1 2-1h4v10h-4l-2 1-2-1h-4zM6.500 1v11M2 3.500h3M2 5.500h3M2 7.500h3M8 3.500h3M8 5.500h3M8 7.500h3" stroke="#fff" /></Svg>
      <div className="ml-[13px] flex h-[21px] w-[38px] items-center justify-center bg-[#1e4788]"><Svg w={14} h={13}><path d="M.5.5h13v12H.5zM2.500 2.500h9M2.500 4.500h9M2.500 6.500h9M2.500 8.500h9M2.500 10.500h9" stroke="#fff" /></Svg></div>
      <Svg w={14} h={13} className="ml-[12px]"><path d="M5 11.500H.5V.5h11V5M2 3.500h8M2 5.500h5M2 7.500h4" stroke="#fff" /><circle cx="10" cy="9" r="3.700" fill="#2b579a" stroke="#fff" /><path d="M8 8l2 2 2-3" stroke="#fff" strokeWidth="1.500" /></Svg>
      <div className="ml-[17px] h-[2px] w-[6px] bg-white" />
      <div className="ml-[4px] flex w-[100px] items-center">
        <div className="h-px w-12 bg-white" /><div className="h-[11px] w-1 bg-white" /><div className="h-px w-12 bg-white" />
      </div>
      <Svg w={8} h={8} className="ml-[4px]"><path d="M0 4h8M4 0v8" stroke="#fff" strokeWidth="2" /></Svg>
      <T w={27} className="mr-[20px] ml-[15px]">100%</T>
    </div>
  );
}

function WordWindow() {
  return (
    <div className="absolute top-[6px] left-[376px] flex h-[872px] w-[1346px] flex-col border border-b-0 border-[#2b579a] bg-white shadow-[0_2px_7px_rgba(0,0,0,0.5)]">
      <TitleBar />
      <Tabs />
      <Ribbon />
      <Document />
      <StatusBar />
    </div>
  );
}

/* ---------- desktop and taskbar ---------- */

function DesktopIcons() {
  return (
    <div className="absolute top-[10px] left-0 flex w-[75px] flex-col items-center text-[11.500px] leading-[15px] text-white">
      <Svg w={38} h={42}>
        <path d="M0 4.500 16 0l22 6-4 32-14 4L4 37z" fill="#a9d2ea" opacity=".85" />
        <path d="M0 4.500 16 0l22 6-17 6z" fill="#5fb2dc" stroke="#e3f2fa" />
        <path d="M21 12 38 6l-4 32-14 4z" fill="#8bb5ce" opacity=".8" />
        <path d="M4 33l14-2 16 2v5l-14 4L4 37z" fill="#d2cccb" />
        <path d="M7 22l3-6 4 2 1 3M15 23l3 5-5 3M10 30l-5-2 1-4" stroke="#1273c6" strokeWidth="3" />
      </Svg>
      <T w={60} className="mt-[6px]">Recycle Bin</T>
      <div className="relative mt-[32px] ml-[1px]">
        <Edge s={48} />
        <Svg w={13} h={13} className="absolute bottom-0 left-0"><path d="M0 0h13v13H0z" fill="#f2f2f2" /><path d="M4 11c-1-4 1-6 3.500-6V3L11 3v5L9.500 7C7 7 6 8 6 11z" fill="#2456a0" /></Svg>
      </div>
      <T w={51} className="mt-[3px]">Microsoft</T>
      <T w={25}>Edge</T>
    </div>
  );
}

function Taskbar() {
  return (
    <div className="absolute bottom-0 left-0 flex h-10 w-full items-center bg-linear-to-r from-[#20363f] via-[#21353f] via-55% to-[#1a2843]">
      <div className="flex h-10 w-12 items-center justify-center"><Svg w={16} h={16}><path d="M0 2.200 6.500 1.300v6.200H0zM7.300 1.200 16 0v7.500H7.300zM0 8.300h6.500v6.300L0 13.700zM7.300 8.300H16V16l-8.700-1.200z" fill="#fff" /></Svg></div>
      <div className="flex h-10 w-[344px] items-center border border-[#bdbdbd] bg-[#f2f2f2] text-[#3a3a3a]">
        <Svg w={17} h={17} className="ml-[11px]"><circle cx="10.500" cy="6" r="5.300" stroke="#333" strokeWidth="1.300" /><path d="M6.800 10 .5 16.300" stroke="#333" strokeWidth="1.300" /></Svg>
        <T w={129} className="ml-[11px] pt-px text-[14.500px]">Type here to search</T>
      </div>
      <Svg w={17} h={16} className="ml-[16px]"><path d="M.5 1v2.500h10V1M.5 5.500h10v6H.5zM.5 16v-2.500h10V16M14.500 0v4M14.500 9v7" stroke="#fff" strokeWidth="1.200" /><path d="M13 5h3v3h-3z" fill="#fff" /></Svg>
      <Svg w={24} h={20} className="ml-[30px]"><path d="M0 6 12 0l12 6v14H0z" fill="#fff" /><path d="M0 6h24L11 12l8 4-9-2.500z" fill="#21353f" /></Svg>
      <div className="ml-[25px]"><Edge s={24} /></div>
      <div className="ml-[17px] flex h-10 w-10 flex-col items-center">
        <Svg w={22} h={18} className="mt-[11px]"><path d="M0 0h8l2 3h12v15H0z" fill="#e8a92c" /><path d="M0 3.500h22V18H0z" fill="#fbd462" /><path d="M4 18v-6l2-2h10l2 2v6h-4v-3H8v3z" fill="#3a93d8" /></Svg>
        <div className="mt-auto h-[2px] w-10 bg-[#76b9ed]" />
      </div>
      <Svg w={21} h={24} className="ml-[18px]"><path d="M5 1h11l2 2 2 0 1 4-1.500 10L17 20l-6.500 4L4 20l-2.500-3L0 7l1-4 2 0z" fill="#fb4a20" /><path d="M4 5.500l4 .5h5l4-.5 1 3-2.500 4 .5 2.500-3 1.500 1 2-3.500 2-3.500-2 1-2-3-1.500.5-2.500L3 8.500z" fill="#fff" /><path d="M5.500 9l3 1M15.500 9l-3 1M10.500 10v4M8.500 15l2 1.500 2-1.500" stroke="#fb4a20" strokeWidth="1.200" /></Svg>
      <div className="ml-[15px] flex h-10 w-12 flex-col items-center bg-[#4b5d66]">
        <Svg w={22} h={22} className="mt-[9px]"><path d="M12 2h10v18H12z" fill="#fff" /><path d="M14 5.500h6M14 8h6M14 10.500h6M14 13h6M14 15.500h6M14 18h6" stroke="#2b579a" /><path d="M0 2 13 0v22L0 20z" fill="#2355a4" /><path d="M3 7.500 4.700 14 6.500 8.500 8.300 14 10 7.500" stroke="#fff" strokeWidth="1.500" /></Svg>
        <div className="mt-auto h-[2px] w-12 bg-[#76b9ed]" />
      </div>
      <Svg w={12} h={7} className="ml-auto"><path d="M.5 6.500 6 1l5.500 5.500" stroke="#fff" strokeWidth="1.300" /></Svg>
      <Svg w={16} h={16} className="ml-[10px]"><circle cx="7.500" cy="7.500" r="6.900" stroke="#fff" strokeWidth="1.200" /><path d="M.5 5h14M.5 10h9M7.500.5c-4.500 4-4.500 10 0 14M7.500.5c2.500 2 3.300 4 3.300 7" stroke="#fff" strokeWidth="1.200" /><circle cx="12" cy="12" r="3.700" fill="#1c2c42" stroke="#fff" strokeWidth="1.200" /><path d="M9.500 9.500l5 5" stroke="#fff" strokeWidth="1.200" /></Svg>
      <Svg w={17} h={14} className="ml-[8px]"><path d="M.6 4.500h2.500L6.500 1.300v11.400L3.100 9.500H.6z" stroke="#fff" strokeWidth="1.200" /><path d="M8.700 5a3 3 0 0 1 0 4M11 3a6 6 0 0 1 0 8M13.300 1a9 9 0 0 1 0 12" stroke="#fff" strokeWidth="1.200" /></Svg>
      <div className="ml-[8px] flex w-[53px] flex-col items-center font-['Noto_Sans',sans-serif] text-[12px] leading-[18px] text-white">
        <T w={49}>11:38 AM</T>
        <T w={52}>10/2/2024</T>
      </div>
      <div className="relative ml-[18px]">
        <Svg w={16} h={15} className="mb-[2px]"><path d="M0 0h16v12H7l-3 3v-3H0z" fill="#fff" /><path d="M3 3.500h10M3 6h10M3 8.500h7" stroke="#1b2a42" /></Svg>
        <div className="absolute top-[7px] left-[7px] flex h-4 w-4 items-center justify-center rounded-full border border-[#8a8f96] bg-[#3d444c] text-[11px] font-semibold text-white">2</div>
      </div>
      <div className="mr-[4px] ml-[20px] h-10 w-px bg-[#5a6475]" />
    </div>
  );
}

export default function App() {
  return (
    <div className="relative h-[928px] w-[1758px] overflow-hidden bg-linear-to-r from-[#00abfa] from-0% via-[#0089e6] via-45% to-[#0340b8] to-95% font-['Open_Sans',sans-serif]">
      <div className="absolute inset-0 bg-linear-to-b from-[#0084ea]/40 from-0% via-transparent via-50% to-transparent" />
      <div className="absolute inset-y-0 left-0 w-[500px] bg-linear-to-r from-[#00b4ff]/40 to-transparent" />
      <svg className="absolute top-0 left-0" width="376" height="80" fill="none"><path d="M120 -2C220 24 290 48 376 70" stroke="#35b6ff" strokeWidth="2" opacity=".35" /></svg>
      <DesktopIcons />
      <Explorer />
      <WordWindow />
      <Taskbar />
    </div>
  );
}
